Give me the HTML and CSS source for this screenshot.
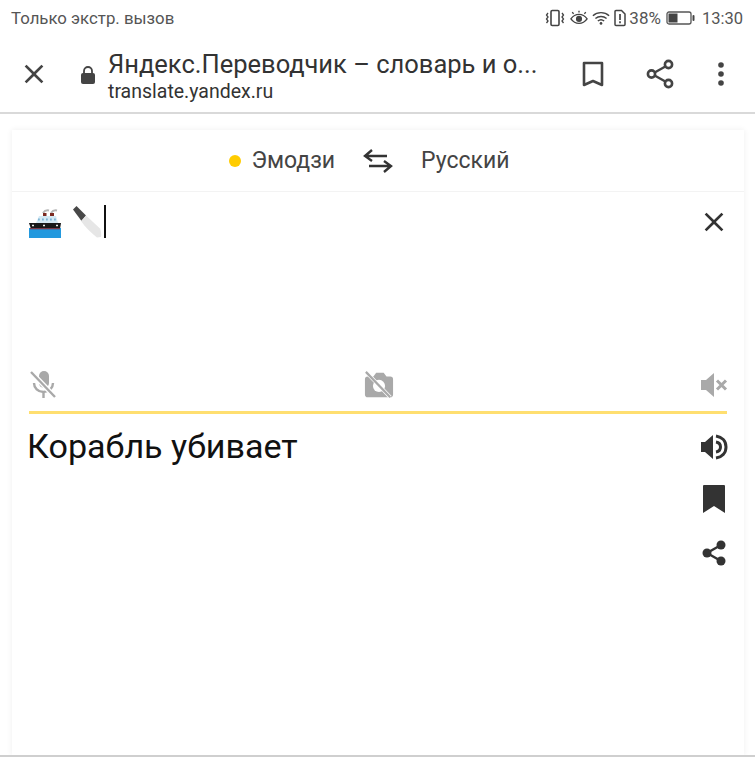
FILE: index.html
```html
<!DOCTYPE html>
<html lang="ru">
<head>
    <meta charset="UTF-8">
    <meta name="viewport" content="width=device-width, initial-scale=1.0">
    <title>Яндекс.Переводчик</title>
    <link rel="stylesheet" href="styles.css">
</head>
<body>

    <div class="status-bar">
        <span class="status-text">Только экстр. вызов</span>
        <div class="status-icons">
            <svg class="icon-vibrate" width="20" height="18" viewBox="0 0 20 18">
                <rect x="6" y="1.500" width="8" height="15" rx="1.200" fill="none" stroke="#444" stroke-width="1.600"/>
                <path d="M3 4l-1.500 2 1.500 2-1.500 2 1.500 2-1.500 2M17 4l1.500 2-1.500 2 1.500 2-1.500 2 1.500 2" fill="none" stroke="#444" stroke-width="1.300"/>
            </svg>
            <svg class="icon-eye" width="18" height="18" viewBox="0 0 20 18">
                <path d="M1 10c2.500-3.500 5.500-5 9-5s6.500 1.500 9 5c-2.500 3.500-5.500 5-9 5s-6.500-1.500-9-5z" fill="none" stroke="#444" stroke-width="1.500"/>
                <circle cx="10" cy="10" r="3.400" fill="#444"/>
                <path d="M4 4.500L2.500 2.500M10 3V1M16 4.500l1.500-2" stroke="#444" stroke-width="1.500"/>
            </svg>
            <svg class="icon-wifi" width="18" height="18" viewBox="0 0 20 18">
                <path d="M1 6.500c5-4.600 13-4.600 18 0M3.800 9.500c3.500-3 8.900-3 12.400 0M6.500 12.300c2-1.700 5-1.700 7 0" fill="none" stroke="#444" stroke-width="1.600"/>
                <circle cx="10" cy="15" r="1.500" fill="#444"/>
            </svg>
            <svg class="icon-sim" width="12" height="18" viewBox="0 0 12 18">
                <path d="M1 2.500a1 1 0 0 1 1-1h5.500L11 5v10.500a1 1 0 0 1-1 1H2a1 1 0 0 1-1-1z" fill="none" stroke="#444" stroke-width="1.500"/>
                <path d="M6 5v6M6 12.300v2" stroke="#444" stroke-width="1.700"/>
            </svg>
            <span class="status-text battery-pct">38%</span>
            <svg class="icon-battery" width="29" height="16" viewBox="0 0 29 16">
                <rect x="1" y="2" width="24" height="12" rx="2" fill="none" stroke="#555" stroke-width="1.300"/>
                <rect x="2.500" y="3.500" width="9" height="9" fill="#444"/>
                <rect x="26.500" y="5" width="2" height="6" rx="1" fill="#444"/>
            </svg>
            <span class="status-text status-time">13:30</span>
        </div>
    </div>

    <div class="toolbar">
        <svg class="toolbar-close" width="32" height="32" viewBox="0 0 24 24">
            <path d="M19 6.410L17.590 5 12 10.590 6.410 5 5 6.410 10.590 12 5 17.590 6.410 19 12 13.410 17.590 19 19 17.590 13.410 12z" fill="#444"/>
        </svg>
        <svg class="toolbar-lock" width="16" height="20" viewBox="0 0 16 20">
            <path d="M4 9V6a4 4 0 0 1 8 0v3" fill="none" stroke="#444" stroke-width="1.800"/>
            <rect x="1" y="8" width="14" height="11" rx="2" fill="#444"/>
        </svg>
        <div class="toolbar-title">
            <div class="page-title">Яндекс.Переводчик – словарь и о...</div>
            <div class="page-url">translate.yandex.ru</div>
        </div>
        <div class="toolbar-actions">
            <svg width="24" height="28" viewBox="0 0 24 28">
                <path d="M3 3h18v22l-9-4-9 4z" fill="none" stroke="#444" stroke-width="2.600" stroke-linejoin="round"/>
            </svg>
            <svg width="28" height="30" viewBox="0 0 28 30">
                <path d="M22 6L6 15l16 9" fill="none" stroke="#444" stroke-width="2.400"/>
                <circle cx="22.500" cy="5.500" r="3.600" fill="#fff" stroke="#444" stroke-width="2.600"/>
                <circle cx="5.500" cy="15" r="3.600" fill="#fff" stroke="#444" stroke-width="2.600"/>
                <circle cx="22.500" cy="24.500" r="3.600" fill="#fff" stroke="#444" stroke-width="2.600"/>
            </svg>
            <svg width="6" height="24" viewBox="0 0 6 24">
                <circle cx="3" cy="3" r="2.800" fill="#444"/>
                <circle cx="3" cy="12" r="2.800" fill="#444"/>
                <circle cx="3" cy="21" r="2.800" fill="#444"/>
            </svg>
        </div>
    </div>

    <div class="card">
        <div class="lang-bar">
            <span class="lang-dot"></span>
            <span class="lang-name lang-from">Эмодзи</span>
            <svg class="lang-swap" width="30" height="26" viewBox="0 0 30 26">
                <path d="M9 2L2 8l7 5M2 8h22M21 13l7 5-7 6M28 18H6" fill="none" stroke="#333" stroke-width="2.400"/>
            </svg>
            <span class="lang-name">Русский</span>
        </div>

        <div class="source">
            <div class="source-top">
                <div class="source-input">
                    <svg class="emoji-ship" width="32" height="29" viewBox="0 0 32 29">
                        <path d="M14 4c2-3 4-3 6-2.500M22 4c2-3 4-3 6-2.500" fill="none" stroke="#b5b5b5" stroke-width="2"/>
                        <rect x="14" y="4" width="3.500" height="4" fill="#7c2a22"/>
                        <rect x="21" y="4" width="4" height="4" fill="#7c2a22"/>
                        <path d="M10 7h17l2 7H7z" fill="#d4e9f4"/>
                        <path d="M9 10.500h1.800M13 10.500h1.800M17 10.500h1.800M21 10.500h1.800M25 10.500h1.800" stroke="#7fb6d6" stroke-width="1.800"/>
                        <path d="M0 14h32l-1 6H2z" fill="#181818"/>
                        <path d="M3 16.500h2M27 16.500h2M14 16.500h2" stroke="#eee" stroke-width="1.300"/>
                        <rect x="0" y="19" width="32" height="10" fill="#2399de"/>
                        <rect x="1" y="19" width="30" height="1.300" fill="#7a3a4a"/>
                    </svg>
                    <svg class="emoji-knife" width="30" height="32" viewBox="0 0 30 32">
                        <path d="M0 3.500L3.500 0 13 9.500 8.500 15z" fill="#484848"/>
                        <path d="M8 15l5-5.500L27 22.500c1 2 1.500 6 1 8.500l-4 .5C18 27 12 21 8 15z" fill="#e6e6e6"/>
                    </svg>
                    <span class="caret"></span>
                </div>
                <svg class="source-clear" width="32" height="32" viewBox="0 0 24 24">
                    <path d="M19 6.410L17.590 5 12 10.590 6.410 5 5 6.410 10.590 12 5 17.590 6.410 19 12 13.410 17.590 19 19 17.590 13.410 12z" fill="#333"/>
                </svg>
            </div>
            <div class="source-tools">
                <svg width="28" height="30" viewBox="0 0 28 30">
                    <rect x="10" y="1" width="10" height="17" rx="5" fill="#a9a9a9"/>
                    <path d="M5 13c0 5 4 9 9.500 9S24 18 24 13M14.500 22v6" fill="none" stroke="#a9a9a9" stroke-width="2.400"/>
                    <path d="M3 3l23 24" stroke="#fff" stroke-width="5"/>
                    <path d="M2 2l24 25" stroke="#a9a9a9" stroke-width="2.400"/>
                </svg>
                <svg width="30" height="28" viewBox="0 0 32 28">
                    <path d="M4 5h6l3-4h8l3 4h4a3 3 0 0 1 3 3v16a3 3 0 0 1-3 3H4a3 3 0 0 1-3-3V8a3 3 0 0 1 3-3z" fill="#a9a9a9"/>
                    <circle cx="16" cy="15" r="6.500" fill="#fff"/>
                    <path d="M3 1l25 26" stroke="#fff" stroke-width="4"/>
                    <path d="M2 0l26 27" stroke="#a9a9a9" stroke-width="2.400"/>
                </svg>
                <svg width="28" height="26" viewBox="0 0 28 26">
                    <path d="M1 8h5l8-7v24l-8-7H1z" fill="#a9a9a9"/>
                    <path d="M17 8.500l9 9M26 8.500l-9 9" stroke="#a9a9a9" stroke-width="3"/>
                </svg>
            </div>
        </div>

        <div class="target">
            <div class="target-text">Корабль убивает</div>
            <div class="target-actions">
                <svg width="28" height="26" viewBox="0 0 28 26">
                    <path d="M1 8h4l8-7v24l-8-7H1z" fill="#333"/>
                    <path d="M16 2c6 1 10 5 10 11s-4 10-10 11" fill="none" stroke="#333" stroke-width="3"/>
                    <path d="M16 8c3 .5 4.500 2.500 4.500 5s-1.500 4.500-4.500 5" fill="none" stroke="#333" stroke-width="3"/>
                </svg>
                <svg width="24" height="30" viewBox="0 0 24 30">
                    <path d="M1 2a1 1 0 0 1 1-1h20a1 1 0 0 1 1 1v27l-11-7-11 7z" fill="#333"/>
                </svg>
                <svg class="target-share" width="24" height="26" viewBox="0 0 24 26">
                    <path d="M19 5L5 13l14 8" fill="none" stroke="#333" stroke-width="2.400"/>
                    <circle cx="19" cy="5" r="4.500" fill="#333"/>
                    <circle cx="5" cy="13" r="4.500" fill="#333"/>
                    <circle cx="19" cy="21" r="4.500" fill="#333"/>
                </svg>
            </div>
        </div>
    </div>

</body>
</html>
```

FILE: styles.css
```css
body {
    font-family: Roboto, 'Noto Sans', sans-serif;
    margin: 0;
    padding: 0;
    background-color: #ffffff;
    display: flex;
    flex-direction: column;
    height: 757px;
    overflow: hidden;
    box-sizing: border-box;
    border-bottom: 2px solid #cfcfcf;
}
svg {
    display: block;
    flex-shrink: 0;
}

/* status bar */
.status-bar {
    height: 36px;
    padding: 0 12px 0 11px;
    display: flex;
    justify-content: space-between;
    align-items: center;
}
.status-text {
    font-size: 16.8px;
    color: #555555;
}
.status-icons {
    display: flex;
    align-items: center;
    gap: 4px;
}
.icon-eye {
    margin-left: 1px;
}
.battery-pct {
    font-size: 17px;
    margin-left: -1px;
}
.icon-battery {
    margin: 0 3px 0 1px;
}
.status-time {
    font-size: 16.5px;
}

/* toolbar */
.toolbar {
    height: 76px;
    display: flex;
    align-items: center;
    border-bottom: 2px solid #d9d9d9;
    padding-left: 18px;
}
.toolbar-lock {
    margin-left: 30px;
    margin-top: 2px;
}
.toolbar-title {
    width: 431px;
    margin-left: 12px;
    padding-top: 3px;
}
.page-title {
    font-size: 25.5px;
    line-height: 31px;
    color: #333333;
    white-space: nowrap;
}
.page-url {
    font-size: 19.5px;
    line-height: 23px;
    color: #333333;
}
.toolbar-actions {
    display: flex;
    align-items: center;
    margin-left: 42px;
    gap: 41px;
}
.toolbar-actions svg:last-child {
    margin-left: 3px;
}

/* card */
.card {
    flex: 1;
    margin: 16px 11px 0 12px;
    box-shadow: 0 0 6px rgba(0, 0, 0, 0.07);
    display: flex;
    flex-direction: column;
}
.lang-bar {
    height: 61px;
    display: flex;
    align-items: center;
    justify-content: center;
    border-bottom: 1px solid #f3f3f3;
    padding-right: 17px;
}
.lang-dot {
    width: 12px;
    height: 12px;
    border-radius: 50%;
    background-color: #ffcc00;
    margin-right: 10px;
}
.lang-name {
    font-size: 23px;
    color: #444444;
}
.lang-swap {
    margin: 0 28px 0 28px;
}

.source {
    height: 222px;
    margin: 0 17px;
    border-bottom: 3px solid #ffdf70;
    box-sizing: border-box;
    display: flex;
    flex-direction: column;
    justify-content: space-between;
}
.source-top {
    display: flex;
    justify-content: space-between;
    align-items: flex-start;
    padding-top: 13px;
}
.source-input {
    display: flex;
    align-items: flex-end;
}
.emoji-knife {
    margin-left: 12px;
}
.caret {
    width: 2px;
    height: 33px;
    background-color: #111111;
    margin-left: 1px;
}
.source-clear {
    margin-right: -3px;
    margin-top: 1px;
}
.source-tools {
    display: flex;
    justify-content: space-between;
    align-items: center;
    padding-bottom: 11px;
    margin-right: -1px;
}
.target {
    flex: 1;
    margin: 0 16px 0 15px;
    display: flex;
    justify-content: space-between;
    align-items: flex-start;
    padding-top: 12px;
}
.target-text {
    font-size: 34.1px;
    line-height: 40px;
    color: #111111;
}
.target-actions {
    display: flex;
    flex-direction: column;
    align-items: center;
    gap: 24px;
    margin-top: 8px;
}
.target-share {
    margin-top: 2px;
}
```
